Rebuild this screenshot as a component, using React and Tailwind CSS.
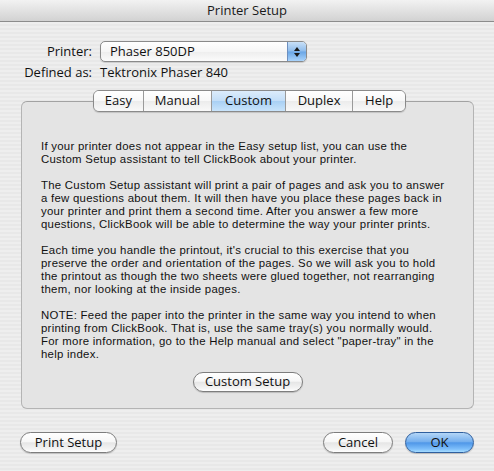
import React from "react";

const btnWhite =
  "flex items-center justify-center rounded-full border border-[#7d7d7d] bg-[linear-gradient(#ffffff_0%,#f7f7f7_45%,#e6e6e6_52%,#f4f4f4_85%,#ffffff_100%)] shadow-[0_1px_1px_rgba(0,0,0,0.18)] text-[13px] text-[#111]";

function Tab({ label, w, selected, last }) {
  return (
    <div
      className={
        "flex items-center justify-center h-full text-[13px] " +
        (selected
          ? "bg-[linear-gradient(#dcecfb_0%,#c3def8_48%,#a9d0f4_52%,#c9e4fb_100%)] "
          : "bg-[linear-gradient(#ffffff_0%,#f8f8f8_48%,#ececec_52%,#f9f9f9_100%)] ") +
        (last ? "" : "border-r border-[#9a9a9a] ")
      }
      style={{ width: w }}
    >
      {label}
    </div>
  );
}

export default function App() {
  return (
    <div className="relative flex h-[471px] w-[494px] flex-col overflow-hidden font-['Lucida_Grande','Open_Sans',sans-serif] text-[#111]">
      {/* Title bar */}
      <div className="flex h-[22px] shrink-0 items-center justify-center border-b border-[#8c8c8c] bg-[linear-gradient(#f2f2f2,#d2d2d2)] text-[13px] text-[#1a1a1a]">
        Printer Setup
      </div>

      {/* Body */}
      <div className="flex flex-1 flex-col bg-[image:repeating-linear-gradient(180deg,#eeeeee_0px,#eeeeee_2px,#e8e8e8_2px,#e8e8e8_4px)]">
        {/* Printer row */}
        <div className="mt-[19px] flex h-[21px] items-center">
          <div className="w-[92px] text-right text-[13px]">Printer:</div>
          <div className="ml-[8px] flex h-[21px] w-[207px] items-stretch overflow-hidden rounded-[5px] border border-[#8a8a8a] bg-[linear-gradient(#ffffff,#f6f6f6_50%,#eeeeee_52%,#fbfbfb)] shadow-[0_1px_1px_rgba(0,0,0,0.15)]">
            <div className="flex flex-1 items-center pl-[9px] text-[13px]">Phaser 850DP</div>
            <div className="flex w-[19px] items-center justify-center border-l border-[#6d8fbf] bg-[linear-gradient(#c9e0f7_0%,#8ebcec_48%,#6aa6e6_52%,#a9d3fb_100%)]">
              <svg width="8" height="12" viewBox="0 0 8 12">
                <path d="M4 1 L7 5 L1 5 Z" fill="#1a1a1a" />
                <path d="M4 11 L7 7 L1 7 Z" fill="#1a1a1a" />
              </svg>
            </div>
          </div>
        </div>

        {/* Defined as row */}
        <div className="mt-[3px] flex h-[16px] items-center text-[13px]">
          <div className="w-[92px] text-right">Defined as:</div>
          <div className="ml-[8px]">Tektronix Phaser 840</div>
        </div>

        {/* Tabs */}
        <div className="relative z-10 ml-[93px] mt-[9px] flex h-[22px] w-[313px] overflow-hidden rounded-[6px] border border-[#8a8a8a] shadow-[0_1px_1px_rgba(0,0,0,0.15)]">
          <Tab label="Easy" w={50} />
          <Tab label="Manual" w={69} />
          <Tab label="Custom" w={74} selected />
          <Tab label="Duplex" w={68} />
          <Tab label="Help" w={52} last />
        </div>

        {/* Group box */}
        <div className="ml-[21px] -mt-[11px] flex h-[308px] w-[453px] flex-col rounded-[6px] border border-[#b4b4b4] border-t-[#a2a2a2] bg-[#e4e4e4] pl-[19px] pt-[38px]">
          <div className="whitespace-nowrap font-['Liberation_Sans',Arial,sans-serif] text-[11.4px] leading-[13px] tracking-[0.27px] text-[#111]">
            <p className="mb-[13px]">
              If your printer does not appear in the Easy setup list, you can use the
              <br />
              Custom Setup assistant to tell ClickBook about your printer.
            </p>
            <p className="mb-[13px]">
              The Custom Setup assistant will print a pair of pages and ask you to answer
              <br />
              a few questions about them. It will then have you place these pages back in
              <br />
              your printer and print them a second time. After you answer a few more
              <br />
              questions, ClickBook will be able to determine the way your printer prints.
            </p>
            <p className="mb-[13px]">
              Each time you handle the printout, it's crucial to this exercise that you
              <br />
              preserve the order and orientation of the pages. So we will ask you to hold
              <br />
              the printout as though the two sheets were glued together, not rearranging
              <br />
              them, nor looking at the inside pages.
            </p>
            <p>
              NOTE: Feed the paper into the printer in the same way you intend to when
              <br />
              printing from ClickBook. That is, use the same tray(s) you normally would.
              <br />
              For more information, go to the Help manual and select "paper-tray" in the
              <br />
              help index.
            </p>
          </div>
          <div className="mt-[11px] flex justify-center pr-[19px]">
            <div className={btnWhite + " h-[20px] w-[110px]"}>Custom Setup</div>
          </div>
        </div>

        {/* Bottom buttons */}
        <div className="mt-[23px] flex h-[21px] items-center">
          <div className={btnWhite + " ml-[20px] h-[21px] w-[97px]"}>Print Setup</div>
          <div className={btnWhite + " ml-[206px] h-[21px] w-[70px]"}>Cancel</div>
          <div className="ml-[12px] flex h-[21px] w-[69px] items-center justify-center rounded-full border border-[#2f5f9e] bg-[linear-gradient(#b4d6f7_0%,#76b0ee_45%,#4f97e8_52%,#7fc0fb_85%,#a6dcff_100%)] text-[13px] text-[#111] shadow-[0_1px_1px_rgba(0,0,0,0.2)]">
            OK
          </div>
        </div>
      </div>
    </div>
  );
}
